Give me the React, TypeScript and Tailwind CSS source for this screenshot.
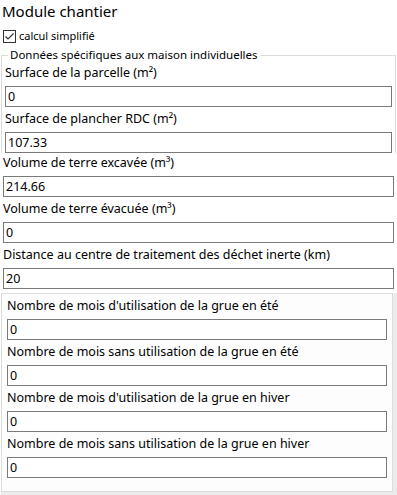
import React from "react";

type FieldProps = {
  label: string;
  value: string;
};

function Field({ label, value }: FieldProps) {
  return (
    <div className="flex flex-col">
      <div className="flex h-[20px] items-center whitespace-nowrap">{label}</div>
      <input
        type="text"
        defaultValue={value}
        className="mt-[3px] mb-[2px] h-[21px] w-full border border-[#7a7a7a] bg-white px-[2px] text-[12.5px] text-black outline-none"
      />
    </div>
  );
}

export default function App() {
  return (
    <div
      className="h-[495px] w-[397px] overflow-hidden bg-white text-[12.5px] text-black"
      style={{ fontFamily: '"Noto Sans", "Open Sans", sans-serif' }}
    >
      <div className="h-[22px] pl-[2px] text-[15px] leading-[22px]">Module chantier</div>

      <label className="mt-[6px] flex h-[16px] items-center gap-[3px] pl-[3px]">
        <span className="flex h-[13px] w-[13px] items-center justify-center border border-[#333333] bg-white">
          <svg width="11" height="11" viewBox="0 0 11 11" fill="none">
            <path d="M1.5 5.5 4 8 9.5 2.5" stroke="#333333" strokeWidth="1.2" />
          </svg>
        </span>
        <span className="text-[11px]">calcul simplifié</span>
      </label>

      <fieldset className="mx-[1px] mt-[3px] h-[106px] border border-b-0 border-[#dcdcdc] px-[3px] pb-0">
        <legend className="ml-[3px] px-[2px] text-[11.5px] leading-[16px]">
          Données spécifiques aux maison individuelles
        </legend>
        <Field label="Surface de la parcelle (m²)" value="0" />
        <Field label="Surface de plancher RDC (m²)" value="107.33" />
      </fieldset>

      <div className="px-[3px]">
        <Field label="Volume de terre excavée (m³)" value="214.66" />
        <Field label="Volume de terre évacuée (m³)" value="0" />
        <Field label="Distance au centre de traitement des déchet inerte (km)" value="20" />
      </div>

      <div className="mt-[2px] ml-[1px] border-r-4 border-b-4 border-[#ececec]">
        <div className="border border-[#dcdcdc] bg-[#fdfdfd] px-[5px] pt-[2px] pb-[11px]">
          <Field label="Nombre de mois d'utilisation de la grue en été" value="0" />
          <Field label="Nombre de mois sans utilisation de la grue en été" value="0" />
          <Field label="Nombre de mois d'utilisation de la grue en hiver" value="0" />
          <Field label="Nombre de mois sans utilisation de la grue en hiver" value="0" />
        </div>
      </div>
    </div>
  );
}
